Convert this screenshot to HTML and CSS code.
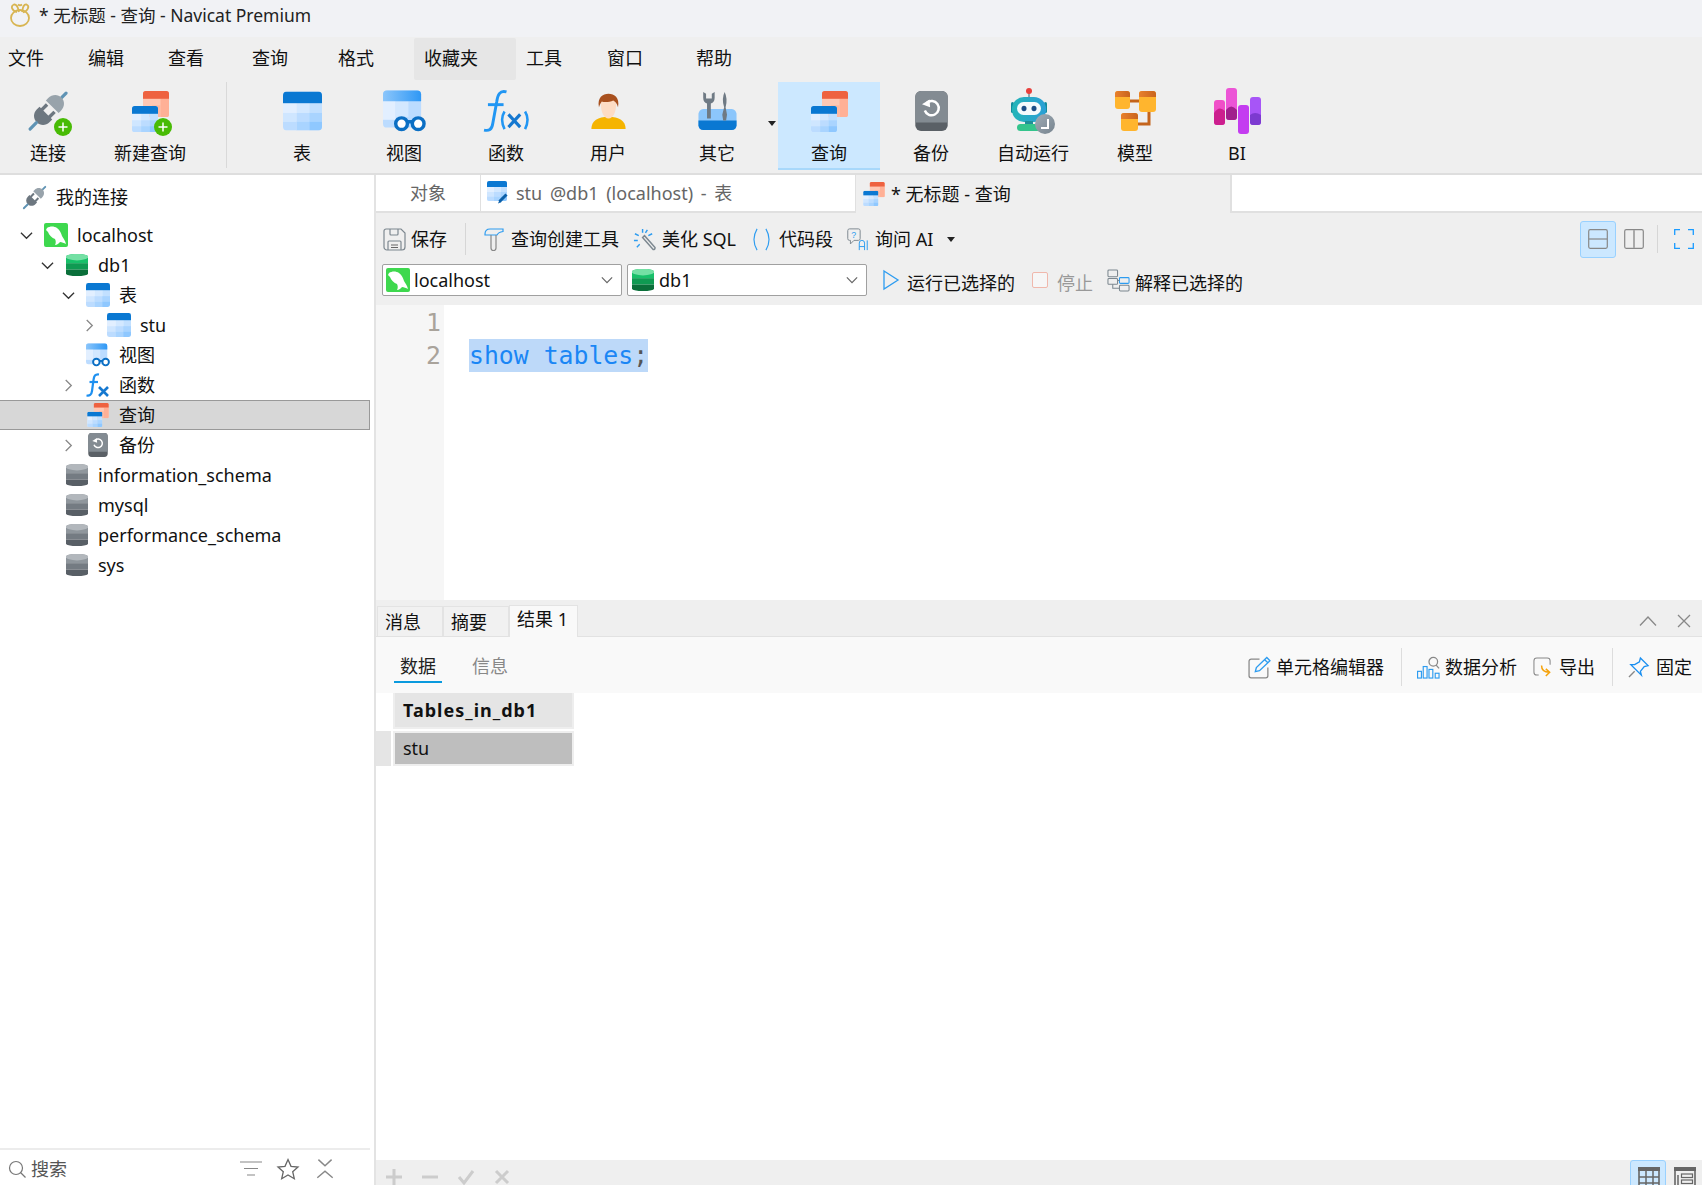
FILE: index.html
```html
<!DOCTYPE html>
<html lang="zh-CN">
<head>
  <meta charset="UTF-8">
  <title>* 无标题 - 查询 - Navicat Premium</title>
  <link rel="stylesheet" href="styles.css">
</head>
<body>

  <!-- shared icons -->
  <svg class="defs" width="0" height="0">
    <defs>
      <linearGradient id="gradHead" x1="0" y1="0" x2="1" y2="0"><stop offset="0" stop-color="#24b5b8"/><stop offset="1" stop-color="#2a9fd6"/></linearGradient>
      <linearGradient id="gradClock" x1="0" y1="0" x2="1" y2="1"><stop offset="0" stop-color="#a0acb6"/><stop offset="1" stop-color="#76838e"/></linearGradient>
      <linearGradient id="gradView" x1="0" y1="0" x2="1" y2="0"><stop offset="0" stop-color="#8cc6fb"/><stop offset="1" stop-color="#2f98f5"/></linearGradient>
      <linearGradient id="gradBand" x1="0" y1="0" x2="1" y2="0"><stop offset="0" stop-color="#e8802c"/><stop offset="1" stop-color="#c9641e"/></linearGradient>
      <clipPath id="clipTbl"><rect width="40" height="40" rx="4"/></clipPath>
      <clipPath id="clipDb"><path d="M0 4C0 0 24 0 24 4V22C24 26 0 26 0 22Z"/></clipPath>
      <symbol id="i-table" viewBox="0 0 40 40">
        <g clip-path="url(#clipTbl)">
          <rect width="14" height="40" fill="#e2efff"/>
          <rect x="14" width="13" height="40" fill="#d3e8ff"/>
          <rect x="27" width="13" height="40" fill="#c2e0ff"/>
          <rect y="22" width="14" height="9" fill="#cfe6ff"/><rect x="14" y="22" width="13" height="9" fill="#bcdcff"/><rect x="27" y="22" width="13" height="9" fill="#a9d4ff"/>
          <rect y="31" width="14" height="9" fill="#bcdcff"/><rect x="14" y="31" width="13" height="9" fill="#a9d4ff"/><rect x="27" y="31" width="13" height="9" fill="#8fc8ff"/>
          <rect width="40" height="12" fill="#0a78d2"/>
        </g>
      </symbol>
      <symbol id="i-table-edit" viewBox="0 0 48 48">
        <use href="#i-table" width="40" height="40"/>
        <path d="M25 41L39 27" stroke="#0b5fa8" stroke-width="6"/>
        <path d="M22 45L25 38L29 42Z" fill="#0b5fa8"/>
      </symbol>
      <symbol id="i-table-o" viewBox="0 0 40 40">
        <g clip-path="url(#clipTbl)">
          <rect width="40" height="40" fill="#ffc8b4"/>
          <rect x="27" y="12" width="13" height="28" fill="#ffb096"/>
          <rect x="14" y="22" width="13" height="18" fill="#ffb89f"/>
          <rect width="40" height="12" fill="#ee6240"/>
        </g>
      </symbol>
      <symbol id="i-query" viewBox="0 0 37 41">
        <use href="#i-table-o" x="11" y="0" width="26" height="26"/>
        <use href="#i-table" x="0" y="15" width="26" height="26"/>
      </symbol>
      <symbol id="i-view" viewBox="0 0 44 42">
        <rect width="39" height="38" rx="4" fill="#bcdcff"/>
        <rect y="5" width="13" height="25" fill="#e2efff"/><rect x="13" y="11" width="13" height="16" fill="#d3e8ff"/>
        <path d="M4 0H35a4 4 0 0 1 4 4V11H0V4a4 4 0 0 1 4-4Z" fill="url(#gradView)"/>
        <circle cx="19" cy="34" r="6" fill="#fff" stroke="#0b6fc4" stroke-width="3.5"/>
        <circle cx="36" cy="34" r="6" fill="#fff" stroke="#0b6fc4" stroke-width="3.5"/>
        <path d="M25 32h5" stroke="#0b6fc4" stroke-width="3.5"/>
      </symbol>
      <symbol id="i-func" viewBox="0 0 48 44">
        <path d="M24 2C17 0 15 5 14 12L10 34C9 41 6 42 1 41" fill="none" stroke="#2196f3" stroke-width="3"/>
        <path d="M5 15H21" stroke="#2196f3" stroke-width="3"/>
        <path d="M22 22Q17 30 22 40M43 22Q48 30 43 40" fill="none" stroke="#2196f3" stroke-width="2.6"/>
        <path d="M26 25L38 38M38 25L26 38" stroke="#1578d0" stroke-width="3.2"/>
      </symbol>
      <symbol id="i-fx" viewBox="0 0 24 24">
        <path d="M13 1.5C9 1 8 3 7.5 7L6 18C5.5 22 3.5 23 .5 22.5" fill="none" stroke="#1e90f0" stroke-width="2.2"/>
        <path d="M3.5 9H12" stroke="#1e90f0" stroke-width="2.2"/>
        <path d="M13 14L22 23M22 14L13 23" stroke="#1578d0" stroke-width="2.6"/>
      </symbol>
      <symbol id="i-user" viewBox="0 0 40 42">
        <path d="M2 40C2 31 9 27 20 27S38 31 38 40Z" fill="#f5b400"/>
        <path d="M12 14c0-8 16-8 16 0 0 8-3 15-8 15s-8-7-8-15Z" fill="#fddcc4"/>
        <path d="M10 17C8 7 14 3 20 3s12 4 10 14c-1-4-3-6-5-7-4 2-10 2-12 1-1 1-2 3-3 6Z" fill="#a8501e"/>
      </symbol>
      <symbol id="i-tools" viewBox="0 0 40 42">
        <path d="M0 24a6 6 0 0 1 5-5H35a6 6 0 0 1 5 5V36a5 5 0 0 1-5 5H5a5 5 0 0 1-5-5Z" fill="#8cc6fb"/>
        <path d="M0 31H40V36a5 5 0 0 1-5 5H5a5 5 0 0 1-5-5Z" fill="#0a78d2"/>
        <path d="M5 1V7Q5 12 9 13V29H13V13Q17 12 17 7V1L14 3V8H8V3Z" fill="#6f7a84"/>
        <path d="M26 31L25 25L27 17Q24 8 27.5 1Q31 8 28.5 17L30 25L29 31Z" fill="#6f7a84"/>
      </symbol>
      <symbol id="i-backup" viewBox="0 0 34 42">
        <rect width="34" height="42" rx="6" fill="#5a6066"/>
        <path d="M0 6a6 6 0 0 1 6-6H28a6 6 0 0 1 6 6V33H0Z" fill="#838b92"/>
        <path d="M12 12.5A7.5 7.5 0 1 1 10 20.5" fill="none" stroke="#fff" stroke-width="2.6"/>
        <path d="M7 14L15 9L15.5 17Z" fill="#fff"/>
      </symbol>
      <symbol id="i-robot" viewBox="0 0 44 46">
        <path d="M18 4V10" stroke="#7b8a93" stroke-width="1.5"/>
        <circle cx="18" cy="3" r="3" fill="#e8403c"/>
        <rect x="0" y="14" width="3" height="11" rx="1.5" fill="#128c9c"/><rect x="33" y="14" width="3" height="11" rx="1.5" fill="#128c9c"/>
        <rect x="1" y="9" width="34" height="25" rx="12" fill="url(#gradHead)"/>
        <rect x="6" y="14" width="24" height="13" rx="6.5" fill="#f4fbfd"/>
        <ellipse cx="13" cy="20.5" rx="2.5" ry="2.8" fill="#1b4f87"/><ellipse cx="23" cy="20.5" rx="2.5" ry="2.8" fill="#1b4f87"/>
        <rect x="14" y="33" width="8" height="4" fill="#1f8f98"/>
        <rect x="6" y="36" width="27" height="7" rx="3.5" fill="#34c48c"/>
        <circle cx="34" cy="36" r="10" fill="url(#gradClock)"/>
        <path d="M37 31V40H30" fill="none" stroke="#fff" stroke-width="2"/>
      </symbol>
      <symbol id="i-model" viewBox="0 0 41 40">
        <path d="M14 10H25M34 20V33H22" fill="none" stroke="#c4641c" stroke-width="3"/>
        <rect x="0" y="0" width="15" height="18" rx="3" fill="#ffb52e"/><path d="M3 0H12a3 3 0 0 1 3 3V6H0V3a3 3 0 0 1 3-3Z" fill="url(#gradBand)"/>
        <rect x="24" y="0" width="17" height="21" rx="3" fill="#ffb52e"/><path d="M27 0H38a3 3 0 0 1 3 3V6H24V3a3 3 0 0 1 3-3Z" fill="url(#gradBand)"/>
        <rect x="6" y="22" width="17" height="18" rx="3" fill="#ffb52e"/><path d="M9 22H20a3 3 0 0 1 3 3V28H6V25a3 3 0 0 1 3-3Z" fill="url(#gradBand)"/>
      </symbol>
      <symbol id="i-bi" viewBox="0 0 47 46">
        <rect x="0" y="12" width="11" height="25" rx="3" fill="#f04fc8"/><path d="M0 25Q5 17 11 23V34a3 3 0 0 1-3 3H3a3 3 0 0 1-3-3Z" fill="#cc1f8e"/>
        <rect x="12" y="0" width="11" height="32" rx="3" fill="#ec55d6"/><path d="M12 22Q17 15 23 22V29a3 3 0 0 1-3 3H15a3 3 0 0 1-3-3Z" fill="#a0208c"/>
        <rect x="24" y="17" width="11" height="29" rx="3" fill="#c43cf0"/>
        <rect x="36" y="9" width="11" height="28" rx="3" fill="#a755f7"/><path d="M36 27Q41 23 47 27V34a3 3 0 0 1-3 3H39a3 3 0 0 1-3-3Z" fill="#7c3ad0"/>
      </symbol>
      <symbol id="i-plug" viewBox="0 0 42 42">
        <g transform="rotate(45 21 21)">
          <rect x="19.5" y="-6" width="3.2" height="9" rx="1.5" fill="#5f93b4"/>
          <path d="M12 12C12 6 16 2 21 2S30 6 30 12V15H12Z" fill="#98a3ab"/>
          <rect x="14" y="17" width="3.4" height="8" fill="#6d7780"/><rect x="24.6" y="17" width="3.4" height="8" fill="#6d7780"/>
          <path d="M12 24H30V28C30 33 26 37 21 37S12 33 12 28Z" fill="#6d7780"/>
          <rect x="19.5" y="36" width="3.2" height="12" rx="1.5" fill="#5f93b4"/>
        </g>
      </symbol>
      <symbol id="i-plus" viewBox="0 0 18 18">
        <circle cx="9" cy="9" r="9" fill="#48bb05"/>
        <path d="M9 4.5V13.5M4.5 9H13.5" stroke="#fff" stroke-width="1.5"/>
      </symbol>
      <symbol id="i-mysql" viewBox="0 0 24 24">
        <rect width="24" height="24" rx="2" fill="#3ed84e"/>
        <path d="M3 5C6 3 10 3 13 5C16 7 17 10 18 13C19 15 21 17 22 21C20 20 18 19 16 19C15 20 13 22 11 22C12 20 12 18 11 16C8 15 5 12 4 9L2 7Z" fill="#fff"/>
      </symbol>
      <symbol id="i-db-g" viewBox="0 0 24 26">
        <g clip-path="url(#clipDb)">
          <rect width="24" height="11" fill="#17c069"/><rect y="11" width="24" height="7" fill="#0f9a52"/><rect y="18" width="24" height="8" fill="#0a6f3a"/>
          <ellipse cx="12" cy="4" rx="12" ry="4" fill="#74e0a4"/>
        </g>
      </symbol>
      <symbol id="i-db" viewBox="0 0 24 26">
        <g clip-path="url(#clipDb)">
          <rect width="24" height="11" fill="#8f969c"/><rect y="11" width="24" height="7" fill="#747b82"/><rect y="18" width="24" height="8" fill="#585f66"/>
          <ellipse cx="12" cy="4" rx="12" ry="4" fill="#b2b7bc"/>
        </g>
      </symbol>
      <symbol id="i-chev" viewBox="0 0 14 14">
        <path d="M1 4L7 10L13 4" fill="none" stroke="currentColor" stroke-width="1.4"/>
      </symbol>
    </defs>
  </svg>

  <div class="titlebar">
    <svg class="logo" viewBox="0 0 24 24" width="24" height="24"><g fill="none" stroke="#d8b552" stroke-width="1.8"><ellipse cx="12" cy="15" rx="9" ry="8"/><path d="M9 9C4 8 2 3 6 1.5C10 1 10 6 11 9"/><path d="M14 9C15 5 15 1 18.5 1.5C22 3 20 8 15 9.5"/><path d="M10 1.5Q12 3 14 1.5"/></g></svg>
    <span>* 无标题 - 查询 - Navicat Premium</span>
  </div>

  <div class="menubar">
    <span class="menu m80">文件</span>
    <span class="menu m80">编辑</span>
    <span class="menu m84">查看</span>
    <span class="menu m86">查询</span>
    <span class="menu m84">格式</span>
    <span class="menu m102 hover">收藏夹</span>
    <span class="menu m83">工具</span>
    <span class="menu m89">窗口</span>
    <span class="menu">帮助</span>
  </div>

  <div class="toolbar">
    <div class="tool w96"><span class="tool-ico"><svg class="ic-plug"><use href="#i-plug"/></svg><svg class="badge"><use href="#i-plus"/></svg></span><span class="tool-label">连接</span></div>
    <div class="tool w108"><span class="tool-ico"><svg class="ic-query"><use href="#i-query"/></svg><svg class="badge"><use href="#i-plus"/></svg></span><span class="tool-label">新建查询</span></div>
    <div class="tool-sep"></div>
    <div class="tool"><span class="tool-ico"><svg class="ic-40"><use href="#i-table"/></svg></span><span class="tool-label">表</span></div>
    <div class="tool"><span class="tool-ico"><svg class="ic-44"><use href="#i-view"/></svg></span><span class="tool-label">视图</span></div>
    <div class="tool"><span class="tool-ico"><svg class="ic-func"><use href="#i-func"/></svg></span><span class="tool-label">函数</span></div>
    <div class="tool"><span class="tool-ico"><svg class="ic-40"><use href="#i-user"/></svg></span><span class="tool-label">用户</span></div>
    <div class="tool other"><span class="tool-ico"><svg class="ic-40"><use href="#i-tools"/></svg></span><span class="tool-label">其它</span></div>
    <div class="tool-arrow"><i class="caret"></i></div>
    <div class="tool active"><span class="tool-ico"><svg class="ic-query"><use href="#i-query"/></svg></span><span class="tool-label">查询</span></div>
    <div class="tool"><span class="tool-ico"><svg class="ic-40"><use href="#i-backup"/></svg></span><span class="tool-label">备份</span></div>
    <div class="tool"><span class="tool-ico"><svg class="ic-robot"><use href="#i-robot"/></svg></span><span class="tool-label">自动运行</span></div>
    <div class="tool"><span class="tool-ico"><svg class="ic-model"><use href="#i-model"/></svg></span><span class="tool-label">模型</span></div>
    <div class="tool"><span class="tool-ico"><svg class="ic-bi"><use href="#i-bi"/></svg></span><span class="tool-label">BI</span></div>
  </div>

  <div class="main">
    <div class="side">
      <div class="tree">
        <div class="conn-title"><svg class="i25"><use href="#i-plug"/></svg><span>我的连接</span></div>
        <div class="row d0"><span class="arrow"><svg class="chev"><use href="#i-chev"/></svg></span><svg class="i24"><use href="#i-mysql"/></svg><span>localhost</span></div>
        <div class="row d1"><span class="arrow"><svg class="chev"><use href="#i-chev"/></svg></span><svg class="i24"><use href="#i-db-g"/></svg><span>db1</span></div>
        <div class="row d2"><span class="arrow"><svg class="chev"><use href="#i-chev"/></svg></span><svg class="i24"><use href="#i-table"/></svg><span>表</span></div>
        <div class="row d3"><span class="arrow"><svg class="chev right"><use href="#i-chev"/></svg></span><svg class="i24"><use href="#i-table"/></svg><span>stu</span></div>
        <div class="row d2"><span class="arrow"></span><svg class="i24"><use href="#i-view"/></svg><span>视图</span></div>
        <div class="row d2"><span class="arrow"><svg class="chev right"><use href="#i-chev"/></svg></span><svg class="i24"><use href="#i-fx"/></svg><span>函数</span></div>
        <div class="row d2 selected"><span class="arrow"></span><svg class="i24"><use href="#i-query"/></svg><span>查询</span></div>
        <div class="row d2"><span class="arrow"><svg class="chev right"><use href="#i-chev"/></svg></span><svg class="i24"><use href="#i-backup"/></svg><span>备份</span></div>
        <div class="row d1"><span class="arrow"></span><svg class="i24"><use href="#i-db"/></svg><span>information_schema</span></div>
        <div class="row d1"><span class="arrow"></span><svg class="i24"><use href="#i-db"/></svg><span>mysql</span></div>
        <div class="row d1"><span class="arrow"></span><svg class="i24"><use href="#i-db"/></svg><span>performance_schema</span></div>
        <div class="row d1"><span class="arrow"></span><svg class="i24"><use href="#i-db"/></svg><span>sys</span></div>
      </div>
      <div class="search">
        <svg class="i18" viewBox="0 0 18 18"><g fill="none" stroke="#777" stroke-width="1.2"><circle cx="8" cy="8" r="6.5"/><path d="M12.5 12.5L17.5 17.5"/></g></svg>
        <span class="search-text">搜索</span>
        <svg class="s-ico first" viewBox="0 0 22 16"><path d="M0 1H22M4 7.5H18M7 14H15" stroke="#888" stroke-width="1.2"/></svg>
        <svg class="s-ico" viewBox="0 0 22 22"><path d="M11 1.5L14 8.3L21 9L15.7 13.7L17.3 20.7L11 17L4.7 20.7L6.3 13.7L1 9L8 8.3Z" fill="none" stroke="#666" stroke-width="1.3"/></svg>
        <svg class="s-ico" viewBox="0 0 20 20"><path d="M4 1.5L10 7L16 1.5M3 18L10 12L17 18" fill="none" stroke="#888" stroke-width="1.3"/></svg>
      </div>
    </div>

    <div class="content">
      <div class="tabs">
        <div class="tab obj">对象</div>
        <div class="tab doc"><svg class="i24"><use href="#i-table-edit"/></svg><span>stu @db1 (localhost) - 表</span></div>
        <div class="tab doc current"><svg class="i24"><use href="#i-query"/></svg><span>* 无标题 - 查询</span></div>
      </div>

      <div class="qbar">
        <div class="qrow">
          <svg class="q-ico save" viewBox="0 0 23 23"><g fill="none" stroke="#7d8890" stroke-width="1.2"><path d="M3 1H18L22 5V19a3 3 0 0 1-3 3H4a3 3 0 0 1-3-3V3a2 2 0 0 1 2-2Z"/><path d="M7 1V6a1 1 0 0 0 1 1H14a1 1 0 0 0 1-1V1"/><path d="M5 22V14a1 1 0 0 1 1-1H17a1 1 0 0 1 1 1V22"/><path d="M8 17H15M8 19.5H15" stroke="#666"/></g></svg>
          <span class="q-text">保存</span>
          <i class="q-sep"></i>
          <svg class="q-ico" viewBox="0 0 20 23"><path d="M1 6Q1 1 6 1H19V3.5C15 4 14 5 13 7H1Z" fill="none" stroke="#2d9cf0" stroke-width="1.2"/><path d="M7 7V20a2.500 2.500 0 0 0 5 0V7" fill="none" stroke="#888" stroke-width="1.2"/></svg>
          <span class="q-text">查询创建工具</span>
          <svg class="q-ico wide" viewBox="0 0 24 24"><g fill="none" stroke-width="1.5"><path d="M10 10L21 22.5a2 2 0 0 0 2-2L12 8Z" stroke="#7d8890"/><path d="M10 1V5M2 6L6 8M1 13H5M4 20L7 17M15 2L13 5M20 6L16 8" stroke="#2d9cf0"/></g></svg>
          <span class="q-text">美化 SQL</span>
          <svg class="q-ico wide" viewBox="0 0 24 26"><path d="M7 1Q0 13 7 25M17 1Q24 13 17 25" fill="none" stroke="#2d9cf0" stroke-width="1.3"/></svg>
          <span class="q-text">代码段</span>
          <svg class="q-ico wide ai-ico" viewBox="0 0 24 26"><path d="M3 1H13a2 2 0 0 1 2 2V12a2 2 0 0 1-2 2H8L4 18V14H3a2 2 0 0 1-2-2V3a2 2 0 0 1 2-2Z" fill="none" stroke="#7d8890" stroke-width="1.1"/><text x="5" y="11" font-size="10" fill="#2d9cf0" font-family="Liberation Sans">?</text><path d="M14 25V17a3 3 0 0 1 6 0V25M14 21H20M23 14V25" fill="none" stroke="#2d9cf0" stroke-width="1.1"/></svg>
          <span class="q-text">询问 AI</span>
          <i class="caret ai"></i>
          <div class="views">
            <span class="view-btn on"><svg viewBox="0 0 20 20" width="20" height="20"><rect x=".7" y=".7" width="18.6" height="18.6" rx="1.5" fill="none" stroke="#888" stroke-width="1.2"/><path d="M1 10H19" stroke="#888" stroke-width="1.2"/></svg></span>
            <span class="view-btn"><svg viewBox="0 0 20 20" width="20" height="20"><rect x=".7" y=".7" width="18.6" height="18.6" rx="1.5" fill="none" stroke="#888" stroke-width="1.2"/><path d="M10 1V19" stroke="#aaa" stroke-width="2"/></svg></span>
            <i class="q-sep v"></i>
            <svg class="full" viewBox="0 0 20 20" width="20" height="20"><path d="M.7 6V.7H6M14 .7H19.3V6M19.3 14V19.3H14M6 19.3H.7V14" fill="none" stroke="#1a9bff" stroke-width="1.3"/></svg>
          </div>
        </div>
        <div class="qrow second">
          <div class="combo"><svg class="i24"><use href="#i-mysql"/></svg><span>localhost</span><svg class="combo-arrow"><use href="#i-chev"/></svg></div>
          <div class="combo"><svg class="i24"><use href="#i-db-g"/></svg><span>db1</span><svg class="combo-arrow"><use href="#i-chev"/></svg></div>
          <svg class="run" viewBox="0 0 16 20"><path d="M1 1L15 10L1 19Z" fill="none" stroke="#2d9cf0" stroke-width="1.3"/></svg>
          <span class="q-text">运行已选择的</span>
          <span class="stop"></span>
          <span class="q-text off">停止</span>
          <svg class="q-ico wide ex" viewBox="0 0 24 24"><g fill="none" stroke="#7d8890" stroke-width="1.1"><rect x="1" y="1" width="10" height="7" rx="1"/><rect x="1" y="10" width="10" height="6" rx="1"/><rect x="13" y="9" width="10" height="6" rx="1" stroke="#2d9cf0"/><rect x="13" y="17" width="10" height="6" rx="1"/><path d="M6 16V20H13M11 12H13"/></g></svg>
          <span class="q-text">解释已选择的</span>
        </div>
      </div>

      <div class="editor">
        <div class="gutter"><div>1</div><div>2</div></div>
        <div class="code"><div>&nbsp;</div><div><span class="sel">show tables<b class="semi">;</b></span></div></div>
      </div>

      <div class="rtabs">
        <div class="rtab">消息</div>
        <div class="rtab">摘要</div>
        <div class="rtab on">结果 1</div>
        <div class="rtab-ctl">
          <svg viewBox="0 0 18 10" width="18" height="10"><path d="M1 9.5L9 1L17 9.5" fill="none" stroke="#888" stroke-width="1.3"/></svg>
          <svg viewBox="0 0 14 14" width="14" height="14"><path d="M1 1L13 13M13 1L1 13" stroke="#888" stroke-width="1.3"/></svg>
        </div>
      </div>

      <div class="subbar">
        <span class="sub on">数据</span>
        <span class="sub">信息</span>
        <div class="sub-right">
          <svg class="b-ico" viewBox="0 0 22 22"><path d="M11 3H3a2 2 0 0 0-2 2V19a2 2 0 0 0 2 2H17a2 2 0 0 0 2-2V11" fill="none" stroke="#888" stroke-width="1.2"/><path d="M7 15L8 11L18 1.5L21 4.5L11 14ZM16 3.5L19 6.5" fill="none" stroke="#2d9cf0" stroke-width="1.3"/></svg>
          <span class="q-text">单元格编辑器</span>
          <i class="b-sep"></i>
          <svg class="b-ico" viewBox="0 0 24 24"><g fill="none" stroke="#2d9cf0" stroke-width="1.2"><rect x=".6" y="16" width="4" height="7"/><rect x="6.5" y="11" width="4" height="12"/><rect x="12.5" y="14" width="4" height="9"/><rect x="19" y="18" width="4" height="5"/></g><circle cx="17" cy="6" r="4.5" fill="none" stroke="#888" stroke-width="1.3"/><path d="M20 9.5L23 13" stroke="#888" stroke-width="1.3"/></svg>
          <span class="q-text">数据分析</span>
          <svg class="b-ico export" viewBox="0 0 20 22"><path d="M18 8V4a3 3 0 0 0-3-3H4a3 3 0 0 0-3 3V16a3 3 0 0 0 3 3H6" fill="none" stroke="#888" stroke-width="1.1"/><path d="M9 9Q9 16 17 16M13.5 12.5L17.5 16L13.5 20" fill="none" stroke="#f5a20a" stroke-width="1.6"/></svg>
          <span class="q-text">导出</span>
          <i class="b-sep"></i>
          <svg class="b-ico pin" viewBox="0 0 22 22"><path d="M13 1L21 9L17 10L13 15L14 19L3 8L7 8L12 5Z" fill="none" stroke="#1a8ff0" stroke-width="1.4"/><path d="M7 15L1 21" stroke="#888" stroke-width="1.4"/></svg>
          <span class="q-text">固定</span>
        </div>
      </div>

      <div class="results">
        <div class="grid">
          <div class="cell-head">Tables_in_db1</div>
          <div class="grid-row"><div class="row-mark"></div><div class="cell">stu</div></div>
        </div>
      </div>

      <div class="statusbar">
        <svg class="st-ico" viewBox="0 0 16 16"><path d="M8 0V16M0 8H16" stroke="#ccc" stroke-width="3"/></svg>
        <svg class="st-ico" viewBox="0 0 16 16"><path d="M0 8H16" stroke="#ccc" stroke-width="3"/></svg>
        <svg class="st-ico" viewBox="0 0 16 16"><path d="M1 8L6 14L15 2" fill="none" stroke="#ccc" stroke-width="3"/></svg>
        <svg class="st-ico" viewBox="0 0 16 16"><path d="M2 2L14 14M14 2L2 14" stroke="#ccc" stroke-width="3"/></svg>
        <div class="st-right">
          <span class="st-btn on"><svg viewBox="0 0 22 22" width="22" height="22"><rect x="1" y="1" width="20" height="20" fill="none" stroke="#666" stroke-width="1.6"/><rect x="0" y="0" width="22" height="4" fill="#666"/><path d="M1 10H21M1 16H21M8 1V21M15 1V21" stroke="#666" stroke-width="1.5"/></svg></span>
          <span class="st-btn"><svg viewBox="0 0 22 22" width="22" height="22"><rect x="1" y="1" width="20" height="20" fill="none" stroke="#666" stroke-width="1.6"/><rect x="0" y="0" width="22" height="4" fill="#666"/><path d="M4 8V18" stroke="#666" stroke-width="1.5"/><rect x="7.5" y="7" width="11" height="3.5" fill="none" stroke="#666" stroke-width="1.2"/><rect x="7.5" y="13" width="11" height="3.5" fill="none" stroke="#666" stroke-width="1.2"/></svg></span>
        </div>
      </div>
    </div>
  </div>

</body>
</html>
```

FILE: styles.css
```css
html,body{margin: 0; padding: 0; height: 100%; width: 100%; overflow: hidden; background-color: #fff;}
*{box-sizing: border-box;}
body{
  display: flex;
  flex-direction: column;
  font-family: "Noto Sans", "Noto Sans CJK SC", sans-serif;
  font-size: 18px;
  line-height: 24px;
  color: #111;
}
.defs{position: absolute;}
svg{flex: none; display: block; overflow: visible;}

/* title */
.titlebar{
  height: 37px;
  background-color: #f1f2f5;
  display: flex;
  align-items: center;
  padding: 0 0 7px 8px;
  gap: 7px;
  font-size: 17.5px;
  color: #222;
}

/* menu */
.menubar{
  height: 43px;
  background-color: #efefef;
  display: flex;
  align-items: center;
  padding-top: 1px;
}
.menu{height: 42px; line-height: 41px; padding-left: 8px;}
.menu.m80{width: 80px;}
.menu.m83{width: 83px; padding-left: 10px;}
.menu.m84{width: 84px;}
.menu.m86{width: 86px;}
.menu.m89{width: 89px;}
.menu.m102{width: 102px; padding-left: 10px;}
.menu.hover{background-color: #e6e6e6; border-radius: 2px;}

/* big toolbar */
.toolbar{
  height: 95px;
  background-color: #efefef;
  border-bottom: 2px solid #dedede;
  display: flex;
  align-items: flex-start;
  padding-top: 2px;
}
.tool{
  width: 102px;
  height: 88px;
  display: flex;
  flex-direction: column;
  align-items: center;
  padding-top: 4px;
}
.tool.w96{width: 96px;}
.tool.w108{width: 108px;}
.tool.other{margin-left: 7px;}
.tool.active{background-color: #cce8ff; border-bottom: 2px solid #a8d8fb;}
.tool-ico{
  position: relative;
  height: 50px;
  display: flex;
  align-items: center;
  justify-content: center;
}
.tool-label{margin-top: 5px;}
.badge{position: absolute; right: -3px; bottom: 0; width: 18px; height: 18px;}
.tool-sep{width: 1px; height: 86px; margin: 0 24px 0 22px; background-color: #d9d9d9;}
.tool-arrow{width: 10px; height: 88px; display: flex; align-items: center; padding-bottom: 6px;}
.caret{display: block; width: 0; height: 0; border: 4px solid transparent; border-top: 5px solid #222; border-bottom: 0;}

.ic-40{width: 39px; height: 40px;}
.ic-44{width: 43px; height: 42px;}
.ic-plug{width: 42px; height: 42px;}
.ic-query{width: 37px; height: 41px;}
.ic-func{width: 47px; height: 43px;}
.ic-robot{width: 44px; height: 46px;}
.ic-model{width: 41px; height: 40px;}
.ic-bi{width: 47px; height: 46px;}
.i25{width: 25px; height: 25px;}
.i24{width: 24px; height: 24px;}
.i18{width: 18px; height: 18px;}

/* main area */
.main{flex: 1; display: flex; min-height: 0;}
.side{
  width: 376px;
  flex: none;
  border-right: 2px solid #e3e3e3;
  display: flex;
  flex-direction: column;
  padding-right: 4px;
}
.tree{flex: 1; padding-top: 7px;}
.conn-title{height: 30px; display: flex; align-items: center; padding-left: 22px; gap: 9px; margin-bottom: 8px;}
.row{height: 30px; display: flex; align-items: center; white-space: nowrap;}
.row .i24{margin-right: 9px;}
.row.d0{padding-left: 20px;}
.row.d1{padding-left: 41px;}
.row.d2{padding-left: 62px;}
.row.d3{padding-left: 83px;}
.row.selected{background-color: #d7d7d7; border: 1px solid #999; border-left: 0;}
.arrow{width: 24px; flex: none;}
.chev{width: 13px; height: 13px; color: #333;}
.chev.right{transform: rotate(-90deg); color: #888;}

.search{
  height: 37px;
  border-top: 2px solid #ececec;
  display: flex;
  align-items: center;
  padding: 3px 0 0 8px;
  color: #555;
}
.search-text{margin-left: 5px;}
.s-ico{width: 22px; height: 22px; margin-left: 15px;}
.s-ico.first{margin-left: 173px;}

/* right side */
.content{flex: 1; display: flex; flex-direction: column; min-width: 0;}
.tabs{height: 38px; display: flex; background-color: #fff;}
.tab{height: 38px; display: flex; align-items: center; background-color: #fff; border-bottom: 2px solid #e0e0e0; border-right: 1px solid #e0e0e0;}
.tab.obj{width: 105px; justify-content: center; color: #666;}
.tab.doc{width: 375px; padding-left: 6px; gap: 5px; color: #666; word-spacing: 3px;}
.tab.current{width: 376px; color: #111; background-color: #efefef; border-bottom: 0; border-right: 2px solid #e0e0e0; word-spacing: 0;}
.tabs::after{content: ""; flex: 1; border-bottom: 2px solid #e0e0e0;}

.qbar{height: 92px; background-color: #efefef; padding-left: 6px;}
.qrow{height: 51px; display: flex; align-items: center; padding-top: 1px;}
.qrow.second{height: 41px; padding-top: 0; padding-bottom: 9px;}
.second .q-text{padding-top: 5px;}
.q-ico{width: 20px; height: 23px; margin-right: 7px;}
.q-ico.save{width: 23px; margin-right: 5px; margin-left: 1px;}
.q-ico.wide{width: 23px; margin-left: 14px; margin-right: 6px;}
.q-ico.wide.ai-ico{margin-left: 13px;}
.q-ico.wide.ex{margin-left: 14px; margin-right: 5px;}
.q-text{white-space: nowrap;}
.q-text.off{color: #999;}
.q-sep{width: 1px; height: 32px; background-color: #d6d6d6; margin: 0 18px 0 18px;}
.caret.ai{margin-left: 14px;}
.views{margin-left: auto; display: flex; align-items: center; padding-right: 8px;}
.view-btn{width: 36px; height: 37px; display: flex; align-items: center; justify-content: center; border: 1px solid transparent;}
.view-btn.on{background-color: #cce8ff; border-color: #99d1ff; border-radius: 3px;}
.q-sep.v{height: 28px; margin: 0 16px 0 5px;}

.combo{
  width: 240px;
  height: 32px;
  margin-right: 5px;
  background-color: #fff;
  border: 1px solid #a0a0a0;
  border-radius: 2px;
  display: flex;
  align-items: center;
  padding-left: 3px;
  gap: 4px;
}
.combo-arrow{width: 12px; height: 12px; margin-left: auto; margin-right: 8px; color: #666;}
.run{width: 16px; height: 20px; margin: 0 8px 0 11px;}
.stop{width: 16px; height: 16px; margin: 0 9px 0 17px; border: 1px solid #f0b8ac; border-radius: 2px; background-color: #f6f6f6;}

/* editor */
.editor{height: 295px; display: flex; background-color: #fff; font-family: "DejaVu Sans Mono", monospace; font-size: 24.8px; line-height: 33px;}
.gutter{width: 68px; background-color: #f6f6f6; padding: 1px 3px 0 0; text-align: right; color: #a9a39b;}
.code{padding: 1px 0 0 25px; color: #1a86f5;}
.sel{background-color: #bdd9f9; display: inline-block; height: 33px;}
.semi{font-weight: 400; color: #555;}

/* result tabs */
.rtabs{height: 37px; background-color: #efefef; display: flex; align-items: flex-end; padding-left: 1px; border-bottom: 1px solid #e2e2e2;}
.rtab{width: 66px; height: 30px; line-height: 31px; background-color: #f1f1f1; border: 1px solid #e3e3e3; border-bottom: 0; padding-left: 7px;}
.rtab.on{width: 69px; height: 32px; line-height: 27px; margin-bottom: -1px; background-color: #f9f9f9;}
.rtab-ctl{margin-left: auto; display: flex; align-items: center; gap: 20px; padding: 0 11px 8px 0;}

.subbar{height: 56px; background-color: #f9f9f9; display: flex; align-items: center; padding: 4px 0 0 18px;}
.sub{align-self: flex-start; width: 48px; height: 32px; margin: 10px 24px 0 0; text-align: center; line-height: 31px; color: #888; border-bottom: 2px solid transparent;}
.sub.on{color: #222; border-bottom-color: #0a9ade;}
.sub-right{margin-left: auto; display: flex; align-items: center; padding-right: 10px;}
.b-ico{width: 23px; height: 23px; margin-right: 5px;}
.b-ico.export{width: 19px; margin-left: 16px; margin-right: 7px;}
.b-ico.pin{width: 21px; margin-right: 7px;}
.b-sep{width: 1px; height: 38px; background-color: #ddd; margin: 0 15px 0 17px;}

/* result grid */
.results{flex: 1; min-height: 0; background-color: #fff;}
.grid{padding-left: 17px; width: 199px;}
.cell-head{width: 181px; height: 36px; background-color: #e5e5e5; border: 2px solid #eee; border-top: 0; font-weight: 700; letter-spacing: 1px; padding-left: 8px; line-height: 35px; white-space: nowrap;}
.grid-row{display: flex; margin-left: -17px; margin-top: 2px;}
.row-mark{width: 15px; height: 35px; background-color: #e5e5e5; margin-right: 2px;}
.cell{width: 181px; height: 35px; background-color: #bebebe; border: 2px solid #eee; padding-left: 8px; line-height: 31px;}

/* bottom */
.statusbar{height: 25px; background-color: #efefef; display: flex; align-items: flex-start; padding: 9px 0 0 10px; overflow: hidden;}
.st-ico{width: 16px; height: 16px; margin-right: 20px;}
.st-right{margin-left: auto; display: flex; margin-top: -9px;}
.st-btn{width: 36px; height: 36px; padding: 6px 0 0 7px; border: 1px solid transparent;}
.st-btn.on{background-color: #cce8ff; border-color: #99d1ff; border-radius: 3px;}
```
